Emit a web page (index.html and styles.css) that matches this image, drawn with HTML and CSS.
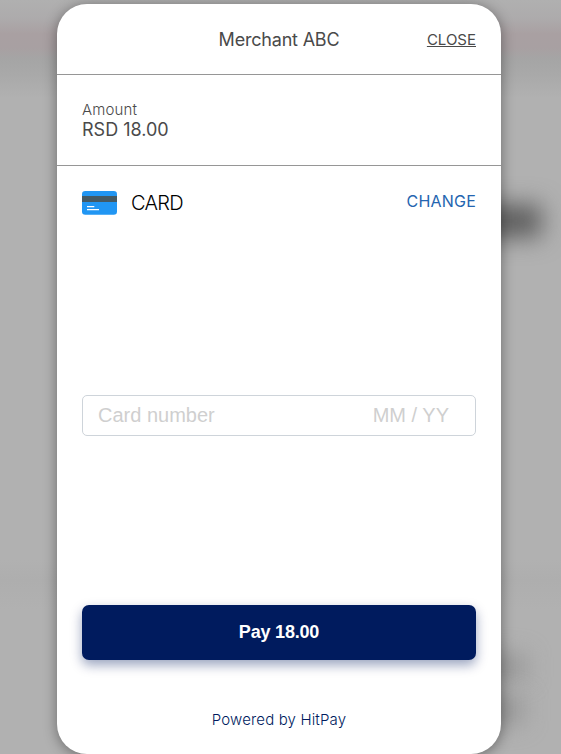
FILE: index.html
```html
<!DOCTYPE html>
<html lang="en">
<head>
<meta charset="utf-8">
<title>Checkout</title>
<link rel="stylesheet" href="styles.css">
</head>
<body>
<div class="smudge smudge-top"></div>
<div class="smudge smudge-low"></div>
<div class="smudge smudge-base"></div>
<main class="dialog">
  <header class="header">
    <h1 class="merchant">Merchant ABC</h1>
    <a class="close">CLOSE</a>
  </header>
  <section class="amount">
    <div class="amount-label">Amount</div>
    <div class="amount-value">RSD 18.00</div>
  </section>
  <section class="payment">
    <div class="method">
      <svg class="card-icon" width="35" height="24" viewBox="0 0 35 24">
        <rect width="35" height="23.7" rx="3.3" fill="#2196f3"/>
        <path fill="#455a64" d="M0 5h35v6H0z"/>
        <path fill="#fff" d="M5 15h7.300v1.300H5zM5 18h12v1.300H5z"/>
      </svg>
      <span class="method-name">CARD</span>
      <a class="change">CHANGE</a>
    </div>
    <div class="field"><span>Card number</span><span class="expiry">MM / YY</span></div>
    <button class="pay">Pay 18.00</button>
  </section>
  <footer class="powered">Powered by HitPay</footer>
</main>
</body>
</html>
```
FILE: styles.css
```css
* { box-sizing: border-box; }
body {
  margin: 0;
  height: 754px;
  padding-top: 4px;
  overflow: hidden;
  position: relative;
  font-family: Inter, "Liberation Sans", sans-serif;
  background: linear-gradient(#b0b0b0 0, #adabac 18px, #a9a0a2 34px, #a8a0a2 48px, #a5a5a5 59px, #a9a9a9 75px, #b1b1b1 98px, #b1b1b1 560px, #aeaeae 580px, #b1b1b1 610px);
}
.smudge { position: absolute; filter: blur(12px); }
.smudge-top { left: 440px; top: 205px; width: 101px; height: 32px; background: #5a5a5a; }
.smudge-low { left: 440px; top: 656px; width: 85px; height: 22px; background: #909090; }
.smudge-base { left: 440px; top: 698px; width: 82px; height: 24px; background: #909090; }
.dialog {
  position: relative;
  display: flex;
  flex-direction: column;
  width: 444px;
  height: 750px;
  margin-left: 57px;
  border-radius: 30px;
  background: #fff;
  box-shadow: 0 2px 14px rgba(0, 0, 0, .4);
}
.header {
  display: grid;
  grid-template-columns: 1fr auto 1fr;
  align-items: center;
  height: 71px;
  padding: 0 25px;
  border-bottom: 1px solid #969696;
  color: #4a4a4a;
}
.merchant { grid-column: 2; margin: 0; font-size: 18px; font-weight: 400; letter-spacing: -.2px; white-space: nowrap; }
.close { justify-self: end; font-size: 15px; text-decoration: underline; }
.amount {
  height: 91px;
  padding: 25px 25px 0;
  border-bottom: 1px solid #969696;
  color: #4a4a4a;
}
.amount-label { font-size: 15px; font-weight: 300; line-height: 20px; letter-spacing: .15px; }
.amount-value { font-size: 18px; line-height: 19px; }
.payment { padding: 25px 25px 0; }
.method { display: flex; align-items: flex-start; height: 204px; }
.method-name { margin-left: 14px; font-size: 20px; font-weight: 300; line-height: 25px; letter-spacing: -.75px; color: #000; }
.change { margin-left: auto; font-size: 16px; line-height: 20px; letter-spacing: .2px; color: #2465b0; }
.field {
  display: flex;
  justify-content: space-between;
  height: 41px;
  padding: 0 26px 0 15px;
  border: 1px solid #ced4da;
  border-radius: 5px;
  font: 20px/38px "Liberation Sans", sans-serif;
  color: #cfcfcf;
}
.pay {
  display: block;
  width: 100%;
  height: 55px;
  margin-top: 169px;
  padding: 0 0 1px;
  border: 0;
  border-radius: 7px;
  background: #001b5e;
  color: #fff;
  font: bold 18px "Liberation Sans", sans-serif;
  letter-spacing: -.2px;
  box-shadow: 0 5px 12px rgba(0, 27, 94, .4);
}
.powered {
  margin-top: 50px;
  text-align: center;
  font-size: 15px;
  font-weight: 300;
  line-height: 20px;
  letter-spacing: .15px;
  color: #001b5e;
}
```
